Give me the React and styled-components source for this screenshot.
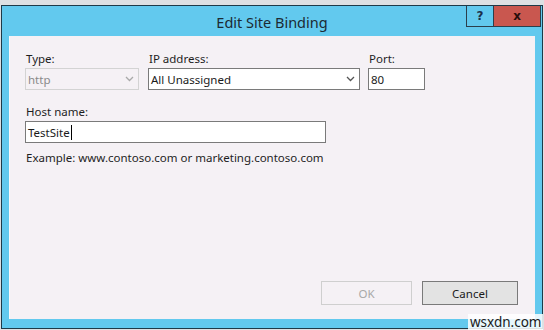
import React from "react";
import styled, { createGlobalStyle } from "styled-components";

const Global = createGlobalStyle`
  html, body { margin: 0; padding: 0; background: #dde0e3; }
  body { width: 544px; height: 330px; overflow: hidden; font-family: "Noto Sans", "Open Sans", sans-serif; }
  #root { position: relative; }
`;

const Window = styled.div`
  margin: 5px 0 0 1px;
  border: 1px solid #1e3a48;
  background: #62c9ee;
  padding: 0 7px 9px 7px;
  box-sizing: content-box;
  width: 526px;
`;

const TitleBar = styled.div`
  height: 30px;
  position: relative;
  display: flex;
  align-items: center;
  justify-content: center;
`;

const Title = styled.div`
  font-size: 14.5px;
  color: #1c2a33;
  padding-top: 2px;
`;

const Controls = styled.div`
  position: absolute;
  right: -6px;
  top: 0;
  display: flex;
`;

const CtrlButton = styled.div`
  width: ${(p) => p.$w}px;
  height: 21px;
  box-sizing: border-box;
  border: 1px solid #2b3f4c;
  border-top: none;
  background: ${(p) => p.$bg};
  display: flex;
  align-items: center;
  justify-content: center;
  font-family: "DejaVu Sans", sans-serif;
  font-weight: bold;
  font-size: 12px;
  color: ${(p) => p.$fg};
  & + & { border-left: none; }
`;

const Client = styled.div`
  height: 283px;
  background: #f5f1f5;
  box-sizing: border-box;
  padding: 15px 17px 14px 15px;
  display: flex;
  flex-direction: column;
  border-left: 1px solid #fbfafc;
`;

const Row = styled.div`
  display: flex;
  margin-top: ${(p) => p.$mt || 0}px;
`;

const Field = styled.div`
  display: flex;
  flex-direction: column;
  width: ${(p) => p.$w}px;
  margin-left: ${(p) => p.$ml || 0}px;
`;

const Label = styled.div`
  font-size: 11.5px;
  color: #1e1e1e;
  height: 17px;
  line-height: 15px;
  padding-left: 1px;
`;

const Box = styled.div`
  height: 22px;
  box-sizing: border-box;
  border: 1px solid ${(p) => (p.$disabled ? "#d3d3d3" : "#7a7a7a")};
  background: ${(p) => (p.$disabled ? "#f5f1f5" : "#ffffff")};
  display: flex;
  align-items: center;
  padding: 0 4px 0 2px;
  font-size: 11.5px;
  color: ${(p) => (p.$disabled ? "#8a8a8a" : "#1a1a1a")};
  justify-content: space-between;
`;

const Caret = styled.span`
  display: inline-block;
  width: 1px;
  height: 15px;
  background: #000;
  margin-left: 1px;
`;

const Text = styled.span`
  display: flex;
  align-items: center;
`;

const Example = styled.div`
  font-size: 11.5px;
  color: #1e1e1e;
  margin-top: 7px;
  padding-left: 1px;
`;

const Spacer = styled.div`
  flex: 1;
`;

const Buttons = styled.div`
  display: flex;
  justify-content: flex-end;
  gap: 10px;
`;

const Button = styled.div`
  width: ${(p) => p.$w}px;
  height: 24px;
  box-sizing: border-box;
  border: 1px solid ${(p) => (p.$disabled ? "#cfcfcf" : "#7a7a7a")};
  background: ${(p) => (p.$disabled ? "#f5f1f5" : "#e3e3e3")};
  color: ${(p) => (p.$disabled ? "#a8a8a8" : "#1a1a1a")};
  font-size: 11.5px;
  display: flex;
  align-items: center;
  justify-content: center;
`;

const Watermark = styled.div`
  position: absolute;
  left: 468px;
  top: 309px;
  padding: 0 2px;
  background: rgba(255, 255, 255, 0.85);
  font-size: 13.5px;
  color: #1a1a1a;
  line-height: 17px;
`;

const Chevron = ({ color }) => (
  <svg width="9" height="6" viewBox="0 0 9 6">
    <path d="M1 1 L4.5 4.5 L8 1" stroke={color} strokeWidth="1.3" fill="none" />
  </svg>
);

export default function App() {
  return (
    <>
      <Global />
      <Window>
        <TitleBar>
          <Title>Edit Site Binding</Title>
          <Controls>
            <CtrlButton $w={28} $bg="#62c9ee" $fg="#1b2f4a">?</CtrlButton>
            <CtrlButton $w={47} $bg="#c9574f" $fg="#2a0e0c">x</CtrlButton>
          </Controls>
        </TitleBar>
        <Client>
          <Row>
            <Field $w={114}>
              <Label>Type:</Label>
              <Box $disabled>
                <span>http</span>
                <Chevron color="#a9a9a9" />
              </Box>
            </Field>
            <Field $w={212} $ml={9}>
              <Label>IP address:</Label>
              <Box>
                <span>All Unassigned</span>
                <Chevron color="#555" />
              </Box>
            </Field>
            <Field $w={57} $ml={8}>
              <Label>Port:</Label>
              <Box>
                <span>80</span>
              </Box>
            </Field>
          </Row>
          <Row $mt={14}>
            <Field $w={301}>
              <Label>Host name:</Label>
              <Box>
                <Text>
                  TestSite
                  <Caret />
                </Text>
              </Box>
            </Field>
          </Row>
          <Example>Example: www.contoso.com or marketing.contoso.com</Example>
          <Spacer />
          <Buttons>
            <Button $w={91} $disabled>OK</Button>
            <Button $w={96}>Cancel</Button>
          </Buttons>
        </Client>
      </Window>
      <Watermark>wsxdn.com</Watermark>
    </>
  );
}
